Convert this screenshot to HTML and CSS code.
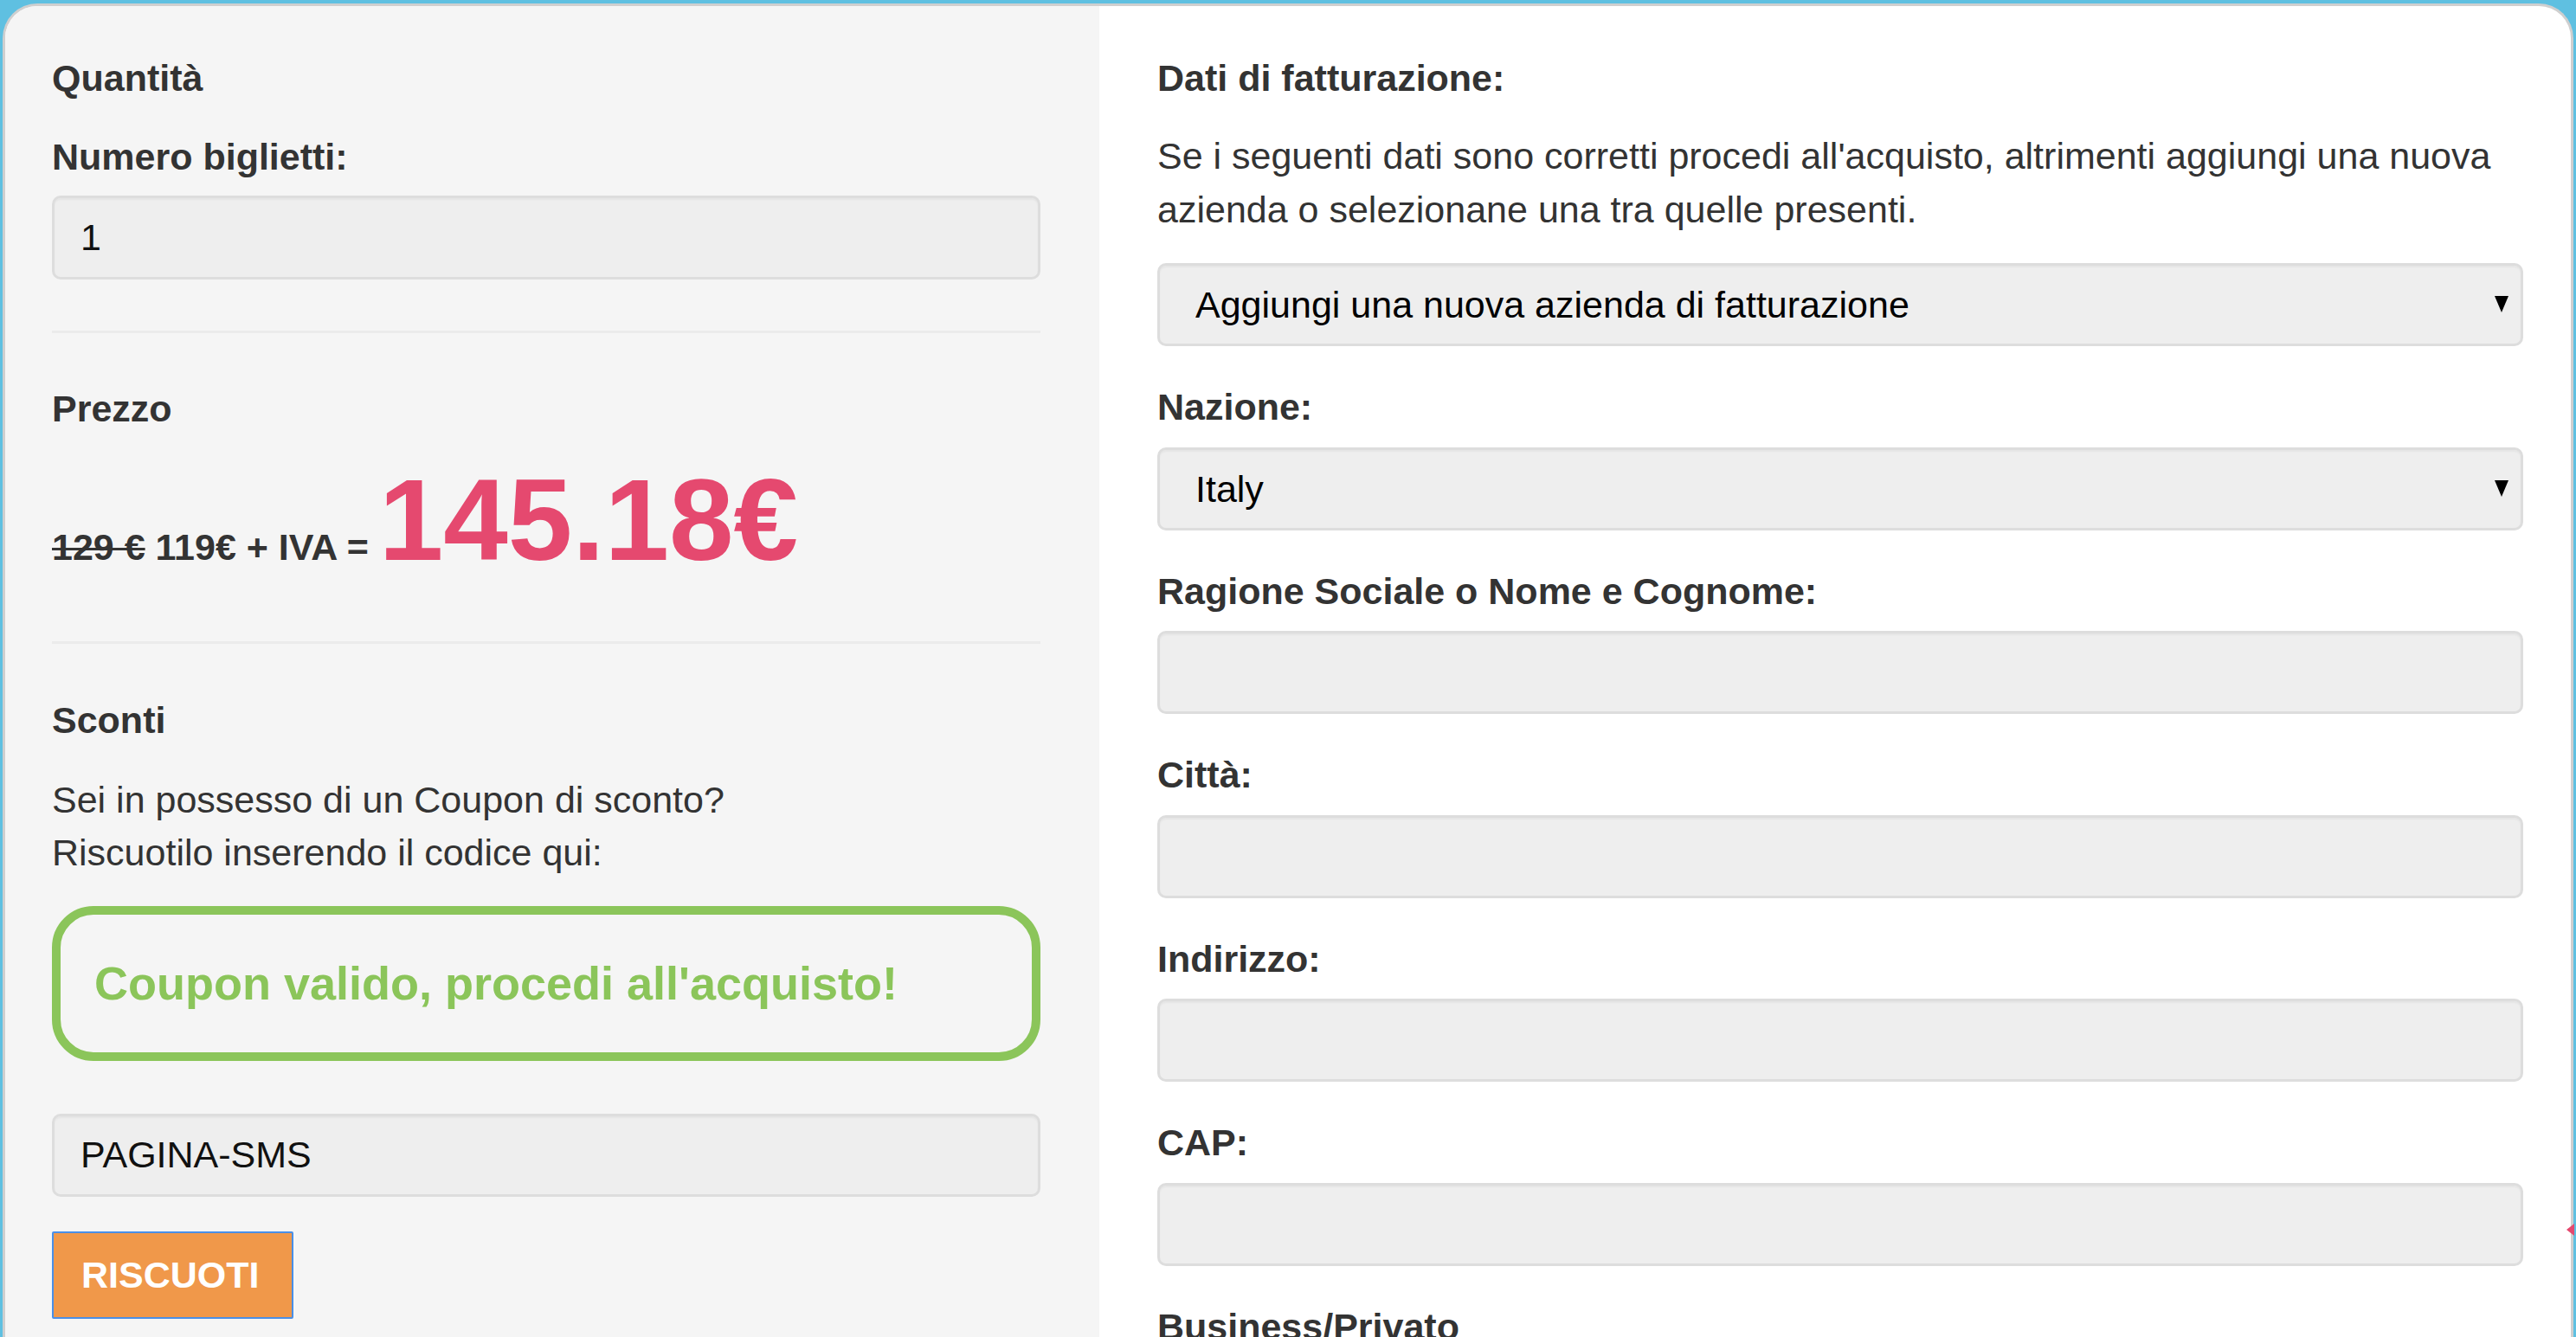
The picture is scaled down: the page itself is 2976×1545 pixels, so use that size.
FILE: index.html
```html
<!DOCTYPE html>
<html>
<head>
    <title>Acquisto biglietti</title>
    <link rel="stylesheet" href="styles.css">
</head>
<body>
    <div class="page">
        <div class="checkout">
            <div class="summary">
                <h4>Quantità</h4>
                <label class="first-label" for="tickets">Numero biglietti:</label>
                <input class="field tickets" type="text" id="tickets" value="1">

                <hr class="rule-quantity">

                <h4 class="title-price">Prezzo</h4>
                <p class="price"><del>129 €</del> 119€ + IVA = <span class="total">145.18€</span></p>

                <hr class="rule-price">

                <h4 class="title-discount">Sconti</h4>
                <p class="coupon-intro">Sei in possesso di un Coupon di sconto?<br>Riscuotilo inserendo il codice qui:</p>
                <div class="coupon-ok">Coupon valido, procedi all'acquisto!</div>
                <input class="field coupon-code" type="text" id="coupon" value="PAGINA-SMS">
                <button type="button" class="btn-redeem">RISCUOTI</button>
            </div>

            <div class="billing">
                <h4>Dati di fatturazione:</h4>
                <p class="billing-intro">Se i seguenti dati sono corretti procedi all'acquisto, altrimenti aggiungi una nuova azienda o selezionane una tra quelle presenti.</p>
                <div class="select-wrap company">
                    <select class="field" id="company">
                        <option>Aggiungi una nuova azienda di fatturazione</option>
                    </select>
                </div>

                <div class="form-group">
                    <label for="country">Nazione:</label>
                    <div class="select-wrap">
                        <select class="field" id="country">
                            <option>Italy</option>
                        </select>
                    </div>
                </div>
                <div class="form-group">
                    <label for="company_name">Ragione Sociale o Nome e Cognome:</label>
                    <input class="field" type="text" id="company_name">
                </div>
                <div class="form-group">
                    <label for="city">Città:</label>
                    <input class="field" type="text" id="city">
                </div>
                <div class="form-group">
                    <label for="address">Indirizzo:</label>
                    <input class="field" type="text" id="address">
                </div>
                <div class="form-group">
                    <label for="zip">CAP:</label>
                    <input class="field" type="text" id="zip">
                </div>
                <div class="form-group">
                    <label for="customer_type">Business/Privato</label>
                </div>
            </div>
        </div>
        <span class="edge-marker"></span>
    </div>
</body>
</html>
```

FILE: styles.css
```css
html,
body {
    margin: 0;
    height: 100%;
    overflow: hidden;
}

body {
    font-family: 'Liberation Sans', Arial, sans-serif;
    font-size: 43px;
    line-height: 1.43;
    color: #333;
    background-color: #5fc0e1;
}

.page {
    position: relative;
    height: 100%;
}

.checkout {
    display: flex;
    margin: 4px 3px 0;
    min-height: 1600px;
    background-color: #fff;
    border: 3px solid #cfcfcf;
    border-bottom: none;
    border-radius: 40px 40px 0 0;
    overflow: hidden;
}

h4,
p,
hr {
    margin: 0;
}

h4,
label {
    display: block;
    font-size: 43px;
    font-weight: bold;
    color: #333;
}

hr {
    border: none;
    height: 3px;
    background-color: #ebebeb;
}

/* left column */
.summary {
    flex: none;
    width: 1264px;
    box-sizing: border-box;
    padding: 53px 68px 0 54px;
    background-color: #f5f5f5;
}

.first-label {
    margin-top: 30px;
}

.field {
    display: block;
    width: 100%;
    height: 96px;
    box-sizing: border-box;
    margin: 0;
    padding: 0 30px;
    border: 3px solid #ddd;
    border-radius: 10px;
    background-color: #eee;
    box-shadow: inset 0 2px 2px rgba(0, 0, 0, 0.04);
    font-family: 'Liberation Sans', Arial, sans-serif;
    font-size: 43px;
    color: #111;
    outline: none;
}

.tickets {
    margin-top: 13px;
    height: 97px;
}

.rule-quantity {
    margin-top: 59px;
}

.title-price {
    margin-top: 57px;
}

.price {
    margin-top: 31px;
    font-weight: bold;
}

.price del {
    text-decoration-thickness: 3px;
}

.total {
    font-size: 134px;
    line-height: 1;
    color: #e5496f;
}

.rule-price {
    margin-top: 73px;
}

.title-discount {
    margin-top: 58px;
}

.coupon-intro {
    margin-top: 30px;
}

.coupon-ok {
    display: flex;
    align-items: center;
    height: 179px;
    box-sizing: border-box;
    margin-top: 30px;
    padding: 0 39px;
    border: 10px solid #8bc55a;
    border-radius: 48px;
    font-size: 54px;
    font-weight: bold;
    color: #8bc55a;
}

.coupon-code {
    margin-top: 61px;
}

.btn-redeem {
    display: block;
    height: 101px;
    margin-top: 40px;
    padding: 0 38px 0 32px;
    border: 2px solid #4a8fe7;
    border-radius: 2px;
    background-color: #f0984a;
    font-family: 'Liberation Sans', Arial, sans-serif;
    font-size: 43px;
    font-weight: bold;
    color: #fff;
    cursor: pointer;
}

/* right column */
.billing {
    flex: 1;
    padding: 53px 55px 0 67px;
}

.billing-intro {
    margin-top: 29px;
}

.select-wrap {
    position: relative;
    margin-top: 15px;
}

.select-wrap.company {
    margin-top: 31px;
}

.select-wrap select {
    appearance: none;
    -webkit-appearance: none;
    padding: 0 60px 0 41px;
    color: #000;
}

.select-wrap::after {
    content: "";
    position: absolute;
    top: 38px;
    right: 17px;
    border-left: 8px solid transparent;
    border-right: 8px solid transparent;
    border-top: 19px solid #000;
}

.form-group {
    margin-top: 40px;
}

.form-group label {
    margin-bottom: 15px;
}

.form-group:first-of-type {
    margin-top: 37px;
}

.edge-marker {
    position: absolute;
    left: 2965px;
    top: 1410px;
    border-top: 7px solid transparent;
    border-bottom: 7px solid transparent;
    border-right: 9px solid #e5496f;
}
```
